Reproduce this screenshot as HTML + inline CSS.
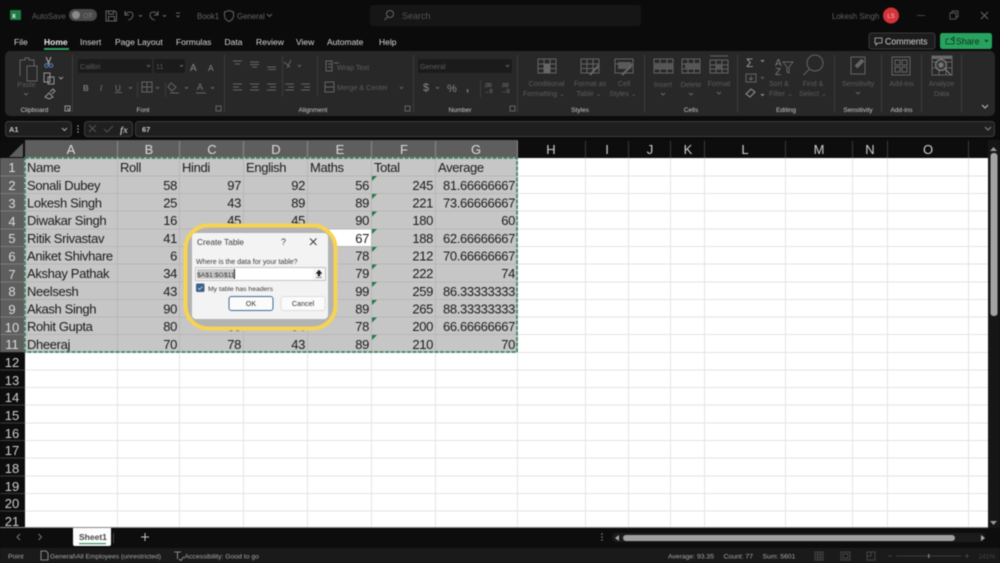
<!DOCTYPE html>
<html><head><meta charset="utf-8"><style>
html,body{margin:0;padding:0;background:#0b0b0b}
svg{display:block;filter:blur(.45px)}
text{font-family:"Liberation Sans",sans-serif}
.c{font-size:13px;fill:#1a1a1a;letter-spacing:-.35px}
.r{text-anchor:end}
.m{text-anchor:middle}
.h{font-size:13px;fill:#dcdcdc;text-anchor:middle}
.hd{font-size:13px;fill:#cfcfcf;text-anchor:middle}
.tab{font-size:8.5px;fill:#d8d8d8}
.dim{font-size:7.2px;fill:#5c5c5c}
.dimm{font-size:7.2px;fill:#5c5c5c;text-anchor:middle}
.grp{font-size:6.5px;fill:#c8c8c8;text-anchor:middle}
.ic{fill:none;stroke:#646464;stroke-width:1}
.il{fill:none;stroke:#989898;stroke-width:1}
.s{font-size:6.8px;fill:#a8a8a8}
.d{font-size:8px;fill:#333}
</style></head><body>
<svg width="1000" height="563" viewBox="0 0 1000 563" xmlns="http://www.w3.org/2000/svg">
<rect width="1000" height="563" fill="#0b0b0b"/>
<!-- title bar -->
<rect x="10" y="10" width="11" height="10" rx="1" fill="#1f7a45"/><text x="12" y="18" font-size="7" font-weight="bold" fill="#fff">x</text>
<text x="32" y="19" font-size="7.8" fill="#5f5f5f">AutoSave</text>
<rect x="69" y="9" width="28" height="12" rx="6" fill="#4a4a4a"/><circle cx="76" cy="15" r="4" fill="#8a8a8a"/><text x="83" y="18" font-size="7" fill="#777">Off</text>
<path class="ic" d="M106 11h9l1.500 1.500v8.500h-10.500zM108.500 11v3h5v-3M108.500 21v-4.500h6v4.500"/>
<path class="ic" d="M125 11v4h4M125 15c2-4 8-4 8 0 0 3-3 5-5 5"/><path class="ic" d="M139 15l1.500 1.500 1.500-1.500"/>
<path class="ic" d="M158 11v4h-4M158 15c-2-4-8-4-8 0 0 3 3 5 5 5"/><path class="ic" d="M163 15l1.500 1.500 1.500-1.500"/>
<path class="ic" d="M176 13h4M176.500 15.500l1.500 1.500 1.500-1.500"/>
<text x="197" y="19" font-size="7.800" fill="#666">Book1</text>
<path class="ic" d="M229 10.500l4.500 1.500v4c0 3-2.500 4.500-4.500 5.500-2-1-4.500-2.500-4.500-5.500v-4z"/>
<text x="237" y="19" font-size="7.800" fill="#666">General</text><path class="ic" d="M267 14l2.500 2.500 2.500-2.500"/>
<rect x="370" y="5" width="271" height="21" rx="3" fill="#161616"/>
<circle cx="390" cy="14" r="3.500" class="ic"/><path class="ic" d="M387.500 17l-3 3"/>
<text x="402" y="19" font-size="9" fill="#555">Search</text>
<text x="832" y="19" font-size="7.800" fill="#5f5f5f">Lokesh Singh</text>
<circle cx="891" cy="15.500" r="8" fill="#d5333a"/><text x="891" y="18" font-size="6" fill="#f4c0c0" text-anchor="middle">LS</text>
<path d="M917 15.500h8" stroke="#444" fill="none"/>
<path d="M950 13h6v6h-6zM952 13v-2h6v6h-2" stroke="#555" fill="none"/>
<path d="M981 12l7 7M988 12l-7 7" stroke="#666" fill="none"/>
<!-- tabs -->
<g class="tab">
<text x="14" y="45">File</text>
<text x="44" y="45" font-weight="bold" fill="#eee">Home</text>
<text x="80" y="45">Insert</text>
<text x="115" y="45">Page Layout</text>
<text x="176" y="45">Formulas</text>
<text x="224.500" y="45">Data</text>
<text x="256" y="45">Review</text>
<text x="296" y="45">View</text>
<text x="327" y="45">Automate</text>
<text x="379" y="45">Help</text>
</g>
<rect x="44" y="48" width="25" height="2" fill="#2f9e5f"/>
<rect x="869" y="33" width="66" height="16" rx="2.500" fill="#1c1c1c" stroke="#444" stroke-width=".8"/>
<path d="M875 38h7v5h-4l-2 2v-2h-1z" stroke="#bbb" fill="none" stroke-width=".8"/>
<text x="885" y="44.500" font-size="8.800" fill="#d5d5d5">Comments</text>
<rect x="940" y="33" width="52" height="16" rx="2.500" fill="#28a25f"/>
<path d="M946 39h3M946 39v5h8v-3M951 39l3-2v4z" stroke="#0d3d22" fill="none" stroke-width=".8"/>
<text x="956" y="44.500" font-size="8.800" fill="#0b2f1b">Share</text>
<path d="M985 40l1.500 1.500 1.500-1.500" stroke="#0b2f1b" fill="none"/>
<!-- ribbon -->
<rect x="5" y="51" width="990" height="65" rx="5" fill="#282828"/>
<g stroke="#3d3d3d" stroke-width="1">
<path d="M72.500 55v57M224.500 55v57M413.500 55v57M517.500 55v57M644.500 55v57M737.500 55v57M834.500 55v57M881.500 55v57M921.500 55v57M961.500 55v57"/>
<path d="M282.500 56v40M317.500 56v40M137.500 82v15M165.500 82v15M480.500 80v17"/>
</g>
<!-- clipboard -->
<path class="ic" d="M20 76V60h5v-2h4v2h5v6M27 66h10v15H27z" stroke="#777"/>
<text x="26.500" y="87" class="dimm">Paste</text><path class="ic" d="M24 93l2 2 2-2"/>
<path d="M46 57l3 7M51 57l-3 7" stroke="#aaa" fill="none"/><circle cx="46.500" cy="65.500" r="1.800" fill="none" stroke="#5a86bb"/><circle cx="51" cy="65.500" r="1.800" fill="none" stroke="#5a86bb"/>
<path d="M44 73h6v9h-6zM48 77h6v7h-6z" class="il"/><path d="M59 77l2 2 2-2" class="il"/>
<path d="M45 97l4-4 4 4-4 2zM50 92l3-3 2 2-3 3" class="il"/>
<text x="34.500" y="112" class="grp">Clipboard</text>
<path class="il" d="M65 106h5v5h-5zM67 108l3 3" stroke-width=".7"/>
<!-- font -->
<rect x="78" y="59" width="74" height="14" rx="2" fill="#1b1b1b"/><text x="80" y="69" class="dim">Calibri</text><path class="ic" d="M147 65l1.500 1.500 1.500-1.500"/>
<rect x="154" y="59" width="31" height="14" rx="2" fill="#1b1b1b"/><text x="156" y="69" class="dim">11</text><path class="ic" d="M180 65l1.500 1.500 1.500-1.500"/>
<text x="190" y="71" font-size="10" fill="#8a8a8a">A</text><text x="208" y="71" font-size="8.500" fill="#8a8a8a">A</text>
<text x="83" y="91" font-size="8" font-weight="bold" fill="#7a7a7a">B</text>
<text x="100" y="91" font-size="8" font-style="italic" fill="#7a7a7a">I</text>
<text x="115" y="91" font-size="8" fill="#7a7a7a">U</text><path class="ic" d="M115 92.500h7M129 87l1.500 1.500 1.500-1.500M156 87l1.500 1.500 1.500-1.500M185 87l1.500 1.500 1.500-1.500M211 87l1.500 1.500 1.500-1.500"/>
<path class="ic" d="M142 82h10v10h-10zM147 82v10M142 87h10"/>
<path class="ic" d="M171 83l5 4-4 4-4-4zM170 93h9"/>
<text x="197" y="90" font-size="9" fill="#7a7a7a">A</text><path class="ic" d="M196 93h10"/>
<text x="143" y="112" class="grp">Font</text>
<path class="ic" d="M216 106h5v5h-5z" stroke-width=".7"/>
<!-- alignment -->
<path class="ic" d="M233 61h9M235 64h5M250 62h9M250 64.500h9M252 67h5M267 67h9M268 69.500h8"/>
<path class="ic" d="M284 62l6 5M291 60l-4 8M298 65l1.500 1.500 1.500-1.500"/>
<path class="ic" d="M326 61h6v10h-6zM328 64h3M328 67h3M334 63h5"/>
<text x="337" y="70" class="dim">Wrap Text</text>
<path class="ic" d="M233 84h9M233 87h6M233 90h9M250 84h9M252 87h6M250 90h9M267 84h9M270 87h6M267 90h9M285 84h9M288 87h6M285 90h9M301 84h9M304 87h6M301 90h9"/>
<path class="ic" d="M325 82h9v10h-9zM325 87h9"/>
<text x="337" y="90" class="dim">Merge &amp; Center</text><path class="ic" d="M400 87l1.500 1.500 1.500-1.500"/>
<text x="313" y="112" class="grp">Alignment</text>
<path class="ic" d="M405 106h5v5h-5z" stroke-width=".7"/>
<!-- number -->
<rect x="418" y="59" width="94" height="14" rx="2" fill="#1b1b1b"/><text x="420" y="69" class="dim">General</text><path class="ic" d="M506 65l1.500 1.500 1.500-1.500"/>
<text x="423" y="91" font-size="11" fill="#8a8a8a">$</text><path class="ic" d="M436 87l1.500 1.500 1.500-1.500"/>
<text x="447" y="92" font-size="11" fill="#8a8a8a">%</text><text x="466" y="91" font-size="11" font-weight="bold" fill="#8a8a8a">,</text>
<text x="484" y="87" font-size="5.500" fill="#8a8a8a">.00</text><text x="484" y="93" font-size="5.500" fill="#8a8a8a">→0</text>
<text x="501" y="87" font-size="5.500" fill="#8a8a8a">.00</text><text x="501" y="93" font-size="5.500" fill="#8a8a8a">→0</text>
<text x="460" y="112" class="grp">Number</text>
<path class="ic" d="M510 106h5v5h-5z" stroke-width=".7"/>
<!-- styles -->
<path class="ic" d="M538 59h18v14h-18zM538 64h18M538 68.500h18M544 59v14M550 59v14"/><rect x="544" y="64" width="6" height="9" fill="#666"/>
<path class="ic" d="M581 59h18v14h-18zM581 64h18M581 68.500h18M587 59v14M593 59v14M590 74l9-9"/><path d="M590 75l9-10" stroke="#666" stroke-width="2"/>
<path class="ic" d="M615 59h18v14h-18zM615 64h18"/><rect x="618" y="62" width="13" height="7" fill="#5a5a5a"/><path d="M622 75l10-10" stroke="#666" stroke-width="2"/>
<text x="546.500" y="86" class="dimm">Conditional</text><text x="544" y="96" class="dimm">Formatting ⌄</text>
<text x="590" y="86" class="dimm">Format as</text><text x="589" y="96" class="dimm">Table ⌄</text>
<text x="624" y="86" class="dimm">Cell</text><text x="623" y="96" class="dimm">Styles ⌄</text>
<text x="580" y="112" class="grp">Styles</text>
<!-- cells -->
<path class="ic" d="M654 59h19v14h-19zM654 64h19M654 69h19M660 59v14M667 59v14"/><rect x="654" y="63" width="19" height="6" fill="#565656"/>
<path class="ic" d="M682 59h18v14h-18zM682 64h18M682 69h18M688 59v14M694 59v14"/><rect x="685" y="63" width="15" height="6" fill="#565656"/>
<path class="ic" d="M710 60h18v13h-18zM710 65h18M710 69h18M716 60v13M722 60v13M710 56h18"/><rect x="716" y="64" width="6" height="5" fill="#565656"/>
<text x="663" y="87" class="dimm">Insert</text><text x="691" y="87" class="dimm">Delete</text><text x="719" y="86" class="dimm">Format</text>
<path class="ic" d="M661 93l2 2 2-2M689 93l2 2 2-2M717 92l2 2 2-2"/>
<text x="691" y="112" class="grp">Cells</text>
<!-- editing -->
<text x="746" y="67" font-size="12" fill="#9a9a9a">Σ</text><path class="il" d="M761 60l1.500 1.500 1.500-1.500"/>
<path class="ic" d="M746 74h10v8h-10zM751 76v4M749 78l2 2 2-2M761 77l1.500 1.500 1.500-1.500"/>
<path class="il" d="M746 94l5-5 4 3-5 5z"/><path class="il" d="M761 94l1.500 1.500 1.500-1.500"/>
<text x="775" y="66" font-size="10" fill="#7a7a7a">A</text><text x="775" y="75" font-size="10" fill="#7a7a7a">Z</text>
<path class="ic" d="M783 62h10l-4 5v6l-2-1v-5z"/>
<circle cx="815" cy="63" r="8" class="ic"/><path class="ic" d="M809.500 69l-6 6"/>
<text x="779" y="86" class="dimm">Sort &amp;</text><text x="781" y="96" class="dimm">Filter ⌄</text>
<text x="813" y="86" class="dimm">Find &amp;</text><text x="813" y="96" class="dimm">Select ⌄</text>
<text x="786" y="112" class="grp">Editing</text>
<!-- sensitivity -->
<path class="ic" d="M851 57h14v17h-14z"/><path d="M856 67l7-7" stroke="#666" stroke-width="4"/>
<text x="858" y="86" class="dimm">Sensitivity</text><path class="ic" d="M856 92l2 2 2-2"/>
<text x="858" y="112" class="grp">Sensitivity</text>
<!-- addins -->
<path class="ic" d="M892 57h18v18h-18zM895 60h5v5h-5zM902 60h5v5h-5zM895 67h5v5h-5zM902 67h5v5h-5z"/>
<text x="901.500" y="86" class="dimm">Add-ins</text>
<text x="901.500" y="112" class="grp">Add-ins</text>
<!-- analyze -->
<path class="ic" d="M932 56h20v19h-20zM932 62h20M939 62v13M946 62v13M932 68h20"/><rect x="932" y="56" width="20" height="3" fill="#6a6a6a"/>
<circle cx="941" cy="65" r="5.500" fill="#3a3a3a" stroke="#888"/><circle cx="941" cy="65" r="2.500" fill="#777"/><path d="M945 69l6 6" stroke="#888"/>
<text x="941.500" y="86" class="dimm">Analyze</text><text x="941.500" y="96" class="dimm">Data</text>
<path d="M982 105l3 3 3-3" stroke="#bbb" fill="none" stroke-width="1.100"/>
<!-- formula bar -->
<rect x="5.500" y="121.500" width="66" height="15" rx="3" fill="#1f1f1f" stroke="#3c3c3c"/>
<text x="9" y="132" font-size="7.500" font-weight="bold" fill="#c8c8c8">A1</text><path d="M62 128l2.500 2.500 2.500-2.500" stroke="#aaa" fill="none"/>
<circle cx="78" cy="126" r=".8" fill="#aaa"/><circle cx="78" cy="129" r=".8" fill="#aaa"/><circle cx="78" cy="132" r=".8" fill="#aaa"/>
<rect x="84.500" y="121.500" width="48" height="15" rx="3" fill="#1f1f1f" stroke="#3c3c3c"/>
<path d="M89 125l7 7M96 125l-7 7M104 129l3 3 6-6" stroke="#555" fill="none"/>
<text x="120" y="133" font-size="9.500" font-style="italic" style="font-family:'Liberation Serif'" fill="#bbb" font-weight="bold">fx</text>
<rect x="135.500" y="121.500" width="859" height="15" rx="3" fill="#1f1f1f" stroke="#3c3c3c"/>
<text x="142" y="132" font-size="7.500" font-weight="bold" fill="#c8c8c8">67</text>
<path d="M985 127l3 3 3-3" stroke="#888" fill="none"/>
<!-- sheet -->
<rect x="0" y="140" width="988" height="388" fill="#0d0d0d"/>
<rect x="25" y="158" width="963" height="369.500" fill="#fff"/>
<polygon points="9,157 23,157 23,143" fill="#5e5e5e"/>
<!-- selected backgrounds -->
<rect x="25" y="140" width="493" height="18" fill="#5e5e5e"/>
<rect x="0" y="158" width="25" height="194.200" fill="#5e5e5e"/>
<rect x="25" y="158" width="493" height="194.200" fill="#c6c6c6"/>
<rect x="308" y="229" width="64" height="17.500" fill="#fff"/>
<!-- gridlines white -->
<g stroke="#e4e4e4" stroke-width="1">
<path d="M518 176h470M518 193.500h470M518 211h470M518 229h470M518 246.500h470M518 264h470M518 282h470M518 299.500h470M518 317h470M518 334.500h470M25 352.500h963M25 370h963M25 387.500h963M25 405h963M25 423h963M25 440.500h963M25 458h963M25 476h963M25 493.500h963M25 511h963"/>
<path d="M117.500 352v176M179.500 352v176M243.500 352v176M307.500 352v176M371.500 352v176M435.500 352v176M517.500 352v176M585.500 158v370M628.500 158v370M670.500 158v370M704.500 158v370M785.500 158v370M852.500 158v370M887.500 158v370M968.500 158v370"/>
</g>
<!-- gridlines selection -->
<g stroke="#b6b6b6" stroke-width="1">
<path d="M25 176h493M25 193.500h493M25 211h493M25 229h493M25 246.500h493M25 264h493M25 282h493M25 299.500h493M25 317h493M25 334.500h493"/>
<path d="M117.500 158v194M179.500 158v194M243.500 158v194M307.500 158v194M371.500 158v194M435.500 158v194"/>
</g>
<!-- header separators -->
<g stroke="#8a8a8a" stroke-width="1"><path d="M117.500 141v17M179.500 141v17M243.500 141v17M307.500 141v17M371.500 141v17M435.500 141v17M517.500 141v17"/></g>
<g stroke="#3a3a3a" stroke-width="1"><path d="M585.500 141v17M628.500 141v17M670.500 141v17M704.500 141v17M785.500 141v17M852.500 141v17M887.500 141v17M968.500 141v17"/>
<path d="M0 370h25M0 387.500h25M0 405h25M0 423h25M0 440.500h25M0 458h25M0 476h25M0 493.500h25M0 511h25"/></g>
<g stroke="#7c7c7c" stroke-width="1"><path d="M0 176h25M0 193.500h25M0 211h25M0 229h25M0 246.500h25M0 264h25M0 282h25M0 299.500h25M0 317h25M0 334.500h25"/></g>
<!-- col headers -->
<text x="71" y="154" class="h">A</text><text x="149" y="154" class="h">B</text><text x="212" y="154" class="h">C</text><text x="276" y="154" class="h">D</text><text x="340" y="154" class="h">E</text><text x="404" y="154" class="h">F</text><text x="476" y="154" class="h">G</text>
<text x="551" y="154" class="hd">H</text><text x="607" y="154" class="hd">I</text><text x="650" y="154" class="hd">J</text><text x="688" y="154" class="hd">K</text><text x="745" y="154" class="hd">L</text><text x="819" y="154" class="hd">M</text><text x="870" y="154" class="hd">N</text><text x="928" y="154" class="hd">O</text>
<!-- row headers -->
<text x="12" y="172" class="h">1</text><text x="12" y="190" class="h">2</text><text x="12" y="208" class="h">3</text><text x="12" y="226" class="h">4</text><text x="12" y="243" class="h">5</text><text x="12" y="261" class="h">6</text><text x="12" y="279" class="h">7</text><text x="12" y="296" class="h">8</text><text x="12" y="314" class="h">9</text><text x="12" y="332" class="h">10</text><text x="12" y="349" class="h">11</text>
<text x="12" y="367" class="hd">12</text><text x="12" y="385" class="hd">13</text><text x="12" y="402" class="hd">14</text><text x="12" y="420" class="hd">15</text><text x="12" y="438" class="hd">16</text><text x="12" y="455" class="hd">17</text><text x="12" y="473" class="hd">18</text><text x="12" y="491" class="hd">19</text><text x="12" y="508" class="hd">20</text><text x="12" y="526" class="hd">21</text>
<!-- cells -->
<g class="c">
<g transform="translate(0,172)"><text x="27">Name</text><text x="120">Roll</text><text x="182">Hindi</text><text x="246">English</text><text x="310">Maths</text><text x="374">Total</text><text x="438">Average</text></g>
<g transform="translate(0,190)"><text x="27">Sonali Dubey</text><text x="177" class="r">58</text><text x="241" class="r">97</text><text x="305" class="r">92</text><text x="369" class="r">56</text><text x="433" class="r">245</text><text x="515" class="r">81.66666667</text></g>
<g transform="translate(0,207.500)"><text x="27">Lokesh Singh</text><text x="177" class="r">25</text><text x="241" class="r">43</text><text x="305" class="r">89</text><text x="369" class="r">89</text><text x="433" class="r">221</text><text x="515" class="r">73.66666667</text></g>
<g transform="translate(0,225)"><text x="27">Diwakar Singh</text><text x="177" class="r">16</text><text x="241" class="r">45</text><text x="305" class="r">45</text><text x="369" class="r">90</text><text x="433" class="r">180</text><text x="515" class="r">60</text></g>
<g transform="translate(0,243)"><text x="27">Ritik Srivastav</text><text x="177" class="r">41</text><text x="369" class="r">67</text><text x="433" class="r">188</text><text x="515" class="r">62.66666667</text></g>
<g transform="translate(0,260.500)"><text x="27">Aniket Shivhare</text><text x="177" class="r">6</text><text x="369" class="r">78</text><text x="433" class="r">212</text><text x="515" class="r">70.66666667</text></g>
<g transform="translate(0,278)"><text x="27">Akshay Pathak</text><text x="177" class="r">34</text><text x="369" class="r">79</text><text x="433" class="r">222</text><text x="515" class="r">74</text></g>
<g transform="translate(0,296)"><text x="27">Neelsesh</text><text x="177" class="r">43</text><text x="369" class="r">99</text><text x="433" class="r">259</text><text x="515" class="r">86.33333333</text></g>
<g transform="translate(0,313.500)"><text x="27">Akash Singh</text><text x="177" class="r">90</text><text x="369" class="r">89</text><text x="433" class="r">265</text><text x="515" class="r">88.33333333</text></g>
<g transform="translate(0,331)"><text x="27">Rohit Gupta</text><text x="177" class="r">80</text><text x="241" class="r">68</text><text x="305" class="r">54</text><text x="369" class="r">78</text><text x="433" class="r">200</text><text x="515" class="r">66.66666667</text></g>
<g transform="translate(0,349)"><text x="27">Dheeraj</text><text x="177" class="r">70</text><text x="241" class="r">78</text><text x="305" class="r">43</text><text x="369" class="r">89</text><text x="433" class="r">210</text><text x="515" class="r">70</text></g>
</g>
<!-- green triangles -->
<g fill="#1e7a45">
<polygon points="372,176 377,176 372,181"/><polygon points="372,194 377,194 372,199"/><polygon points="372,211.500 377,211.500 372,216.500"/><polygon points="372,229 377,229 372,234"/><polygon points="372,247 377,247 372,252"/><polygon points="372,264.500 377,264.500 372,269.500"/><polygon points="372,282 377,282 372,287"/><polygon points="372,300 377,300 372,305"/><polygon points="372,317.500 377,317.500 372,322.500"/><polygon points="372,335 377,335 372,340"/>
</g>
<!-- marching ants -->
<rect x="25" y="158" width="492" height="194" fill="none" stroke="#c6c6c6" stroke-width="1.500"/>
<rect x="25" y="158" width="492" height="194" fill="none" stroke="#2a8055" stroke-width="1.500" stroke-dasharray="4 1.500"/>
<!-- dialog -->
<rect x="185.500" y="225.500" width="150" height="103" rx="23" fill="#b3b3b3" stroke="#f7d354" stroke-width="4"/>
<rect x="192" y="233" width="136" height="86" rx="4" fill="#f3f3f3"/>
<text x="197" y="245" font-size="8.300" fill="#3a3a3a">Create Table</text>
<text x="281" y="245" font-size="9" fill="#444">?</text>
<path d="M310 238.500l6.500 6.500M316.500 238.500l-6.500 6.500" stroke="#333" fill="none" stroke-width=".9"/>
<text x="196" y="264" font-size="7" fill="#3a3a3a">Where is the data for your table?</text>
<rect x="195.500" y="267.500" width="130" height="13" fill="#fff" stroke="#c4c4c4"/>
<rect x="197" y="269" width="37" height="10" fill="#c9c9c9"/>
<text x="197" y="277" font-size="6.800" fill="#333">$A$1:$G$11</text>
<path d="M234.500 269v10" stroke="#222"/>
<rect x="313" y="268" width="12" height="12" fill="#f6f6f6"/>
<path d="M319 270l-3 3.500h2v2.500h2v-2.500h2zM316 277.500h6" fill="#222" stroke="#222" stroke-width=".5"/>
<rect x="196" y="283.500" width="8.500" height="8.500" rx="1.500" fill="#3d5f8a"/>
<path d="M198 288l1.500 1.500 3-3" stroke="#d5deea" fill="none" stroke-width=".8"/>
<text x="208" y="291" font-size="6.800" fill="#3a3a3a">My table has headers</text>
<rect x="229" y="296.500" width="44" height="14" rx="2.500" fill="#fbfbfb" stroke="#3e6a98"/>
<text x="251" y="306" font-size="7.200" fill="#333" text-anchor="middle">OK</text>
<rect x="281" y="296.500" width="44" height="14" rx="2.500" fill="#fbfbfb" stroke="#dedede"/>
<text x="303" y="306" font-size="7.200" fill="#333" text-anchor="middle">Cancel</text>
<!-- v scrollbar -->
<rect x="988" y="140" width="12" height="388" fill="#161616"/>
<polygon points="993.500,147 990,151 997,151" fill="#999"/>
<rect x="990.500" y="153" width="7" height="163" rx="3" fill="#a3a3a3"/>
<polygon points="990,521 997,521 993.500,525" fill="#999"/>
<!-- sheet tab bar -->
<rect x="0" y="528" width="1000" height="20" fill="#0d0d0d"/>
<rect x="0" y="527" width="988" height="1" fill="#888"/>
<path d="M20 534l-3 3 3 3M38.500 534l3 3-3 3" stroke="#777" fill="none"/>
<path d="M73 528h38v16a2 2 0 0 1-2 2H75a2 2 0 0 1-2-2z" fill="#fdfdfd"/>
<text x="79" y="540" font-size="8.500" font-weight="bold" fill="#444">Sheet1</text>
<rect x="79" y="543" width="27" height="1.200" fill="#2d9a5d"/>
<path d="M113.500 533v10" stroke="#444"/>
<path d="M145 533v8M141 537h8" stroke="#c8c8c8" fill="none"/>
<circle cx="602" cy="534" r=".8" fill="#888"/><circle cx="602" cy="537" r=".8" fill="#888"/><circle cx="602" cy="540" r=".8" fill="#888"/>
<rect x="612" y="533" width="373" height="9" rx="4" fill="#1b1b1b"/>
<polygon points="615,538 619,535 619,541" fill="#aaa"/>
<rect x="623" y="535" width="332" height="6" rx="3" fill="#a0a0a0"/>
<polygon points="985,538 981,535 981,541" fill="#aaa"/>
<!-- status bar -->
<rect x="0" y="548" width="1000" height="15" fill="#1a1a1a"/>
<text x="8" y="558.500" class="s">Point</text>
<path d="M41 551h5l2 2v7h-7z" stroke="#a8a8a8" fill="none" stroke-width=".8"/>
<text x="50" y="558.500" class="s">General\All Employees (unrestricted)</text>
<path d="M174 552h7M177.500 552v7M179 559l2 1.500 3-4" stroke="#a8a8a8" fill="none" stroke-width=".8"/>
<text x="184.500" y="558.500" class="s">Accessibility: Good to go</text>
<text x="668" y="558.500" class="s">Average: 93.35</text>
<text x="723.500" y="558.500" class="s">Count: 77</text>
<text x="762.500" y="558.500" class="s">Sum: 5601</text>
<path d="M815 552h8v8h-8zM817.700 552v8M820.300 552v8M815 554.700h8M815 557.300h8" stroke="#555" fill="none" stroke-width=".7"/>
<path d="M841 552h9v8h-9zM843 554h5v4h-5z" stroke="#555" fill="none" stroke-width=".7"/>
<path d="M867 552h8v8h-8zM871 552v4h-4" stroke="#555" fill="none" stroke-width=".7"/>
<path d="M888 556h4M896 556h65M965 556h4M967 554v4" stroke="#4a4a4a" fill="none" stroke-width=".8"/>
<rect x="928" y="554" width="1.500" height="4" fill="#777"/>
<text x="978.500" y="558.500" font-size="6.500" fill="#444">141%</text>
</svg>
</body></html>
